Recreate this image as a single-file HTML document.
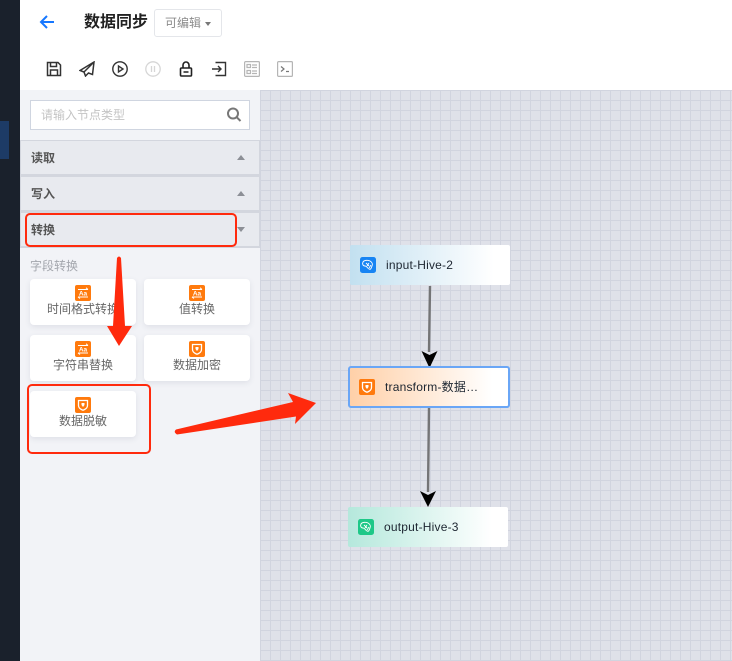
<!DOCTYPE html>
<html lang="zh-CN">
<head>
<meta charset="utf-8">
<style>
*{box-sizing:border-box}
html,body{margin:0;padding:0;width:732px;height:661px;overflow:hidden;background:#fff}
body{position:relative;font-family:"Liberation Sans","Noto Sans CJK SC",sans-serif;color:#333}
.abs{position:absolute}
.t{position:absolute;white-space:nowrap;line-height:16px}
.hdr{position:absolute;left:20px;width:240px;height:36px;background:#e8eaef;border:1px solid #d3d6de;border-bottom-width:2px}
.hdr span{position:absolute;left:10px;top:9px;font-size:12px;line-height:16px;font-weight:bold;color:#555}
.tri{position:absolute;left:216px;top:14px;width:0;height:0;border-left:4px solid transparent;border-right:4px solid transparent;border-bottom:5px solid #8c8f96}
.tri.d{border-bottom:0;border-top:5px solid #8c8f96}
.card{position:absolute;width:106px;height:46px;background:#fff;border-radius:4px;box-shadow:0 2px 6px rgba(60,70,100,.10);text-align:center;overflow:hidden}
.card svg{position:absolute;left:45px;top:6px}
.card span{position:absolute;left:0;right:0;top:22px;font-size:12px;line-height:16px;color:#666;white-space:nowrap}
.node{position:absolute;width:160px;height:40px;border-radius:2px;font-size:12px;letter-spacing:.2px;color:#1c2530}
.node span{position:absolute;left:36px;top:12px;line-height:16px;white-space:nowrap}
.node svg{position:absolute;left:10px;top:12px}
</style>
</head>
<body>
<div class="abs" style="left:0;top:0;width:20px;height:661px;background:#1a212c"></div>
<div class="abs" style="left:0;top:121px;width:9px;height:38px;background:#1d3b66"></div>

<svg class="abs" style="left:38px;top:13px" width="18" height="18" viewBox="0 0 18 18" fill="none" stroke="#1677ff" stroke-width="2"><path d="M3 9H16M9 3 3 9l6 6"/></svg>
<div class="t" style="left:84px;top:13px;font-size:16px;line-height:20px;font-weight:bold;color:#222">数据同步</div>
<div class="abs" style="left:154px;top:9px;width:68px;height:28px;border:1px solid #e4e6ea;border-radius:3px"></div>
<div class="t" style="left:165px;top:15px;font-size:12px;color:#8b8b8b">可编辑</div>
<div class="abs" style="left:205px;top:22px;width:0;height:0;border-left:3.5px solid transparent;border-right:3.5px solid transparent;border-top:4px solid #777"></div>

<!-- toolbar -->
<svg class="abs" style="left:46px;top:61px" width="16" height="16" viewBox="0 0 16 16" fill="none" stroke="#333" stroke-width="1.500"><path d="M1.500 1.500H12L14.500 4V14.500H1.500Z"/><path d="M4.500 1.500V5.500H10.500V1.500M4.500 14.500V9H11.500V14.500"/></svg>
<svg class="abs" style="left:79px;top:61px" width="16" height="16" viewBox="0 0 16 16" fill="none" stroke="#333" stroke-width="1.500"><path d="M15 1 1 9.500l4 1.500 1.500 4 3-3 4 1.500zM15 1 5 11"/></svg>
<svg class="abs" style="left:112px;top:61px" width="16" height="16" viewBox="0 0 16 16" fill="none" stroke="#333" stroke-width="1.400"><circle cx="8" cy="8" r="7.200"/><path d="M6.500 5v6L11 8z"/></svg>
<svg class="abs" style="left:145px;top:61px" width="16" height="16" viewBox="0 0 16 16" fill="none" stroke="#d6d6d6" stroke-width="1.300"><circle cx="8" cy="8" r="7.200"/><path d="M6.500 5v6M9.500 5v6"/></svg>
<svg class="abs" style="left:178px;top:61px" width="16" height="16" viewBox="0 0 16 16" fill="none" stroke="#222" stroke-width="1.600"><rect x="2.500" y="7" width="11" height="8" rx="1"/><path d="M5 7V4a3 3 0 0 1 6 0V7M5.500 11H10.500"/></svg>
<svg class="abs" style="left:211px;top:61px" width="16" height="16" viewBox="0 0 16 16" fill="none" stroke="#333" stroke-width="1.400"><path d="M4.500 1.500H14.500V14.500H4.500M1 8H10M7 5l3 3-3 3"/></svg>
<svg class="abs" style="left:244px;top:61px" width="16" height="16" viewBox="0 0 16 16" fill="none" stroke="#b5b5b5" stroke-width="1.200"><rect x=".6" y=".6" width="14.800" height="14.800" rx="1"/><path d="M3 3.500H6.500V6.500H3ZM3 9.500H6.500V12.500H3ZM8 4H13M8 6.500H13M8 10H13M8 12.500H13"/></svg>
<svg class="abs" style="left:277px;top:61px" width="16" height="16" viewBox="0 0 16 16" fill="none" stroke="#b5b5b5" stroke-width="1.200"><rect x=".6" y=".6" width="14.800" height="14.800" rx="1"/><path stroke="#777" d="M4 5.500 7 8 4 10.500M9 10.500H12"/></svg>

<!-- left panel -->
<div class="abs" style="left:20px;top:90px;width:240px;height:571px;background:#f2f3f7"></div>
<div class="abs" style="left:30px;top:100px;width:220px;height:30px;background:#fff;border:1px solid #cfd5e0"></div>
<div class="t" style="left:41px;top:107px;font-size:12px;color:#c4c4c4">请输入节点类型</div>
<svg class="abs" style="left:226px;top:106px" width="16" height="17" viewBox="0 0 16 17" fill="none" stroke="#777" stroke-width="2"><circle cx="7" cy="7.500" r="5"/><path d="M10.800 11.300 14.500 15"/></svg>

<div class="hdr" style="top:140px"><span>读取</span><i class="tri"></i></div>
<div class="hdr" style="top:176px"><span>写入</span><i class="tri"></i></div>
<div class="hdr" style="top:212px"><span>转换</span><i class="tri d"></i></div>

<div class="t" style="left:30px;top:258px;font-size:12px;color:#a3a6ad">字段转换</div>

<div class="card" style="left:30px;top:279px"><svg width="16" height="16" viewBox="0 0 16 16"><rect width="16" height="16" rx="2" fill="#ff7a0d"/><path d="M3 4.500H13M11 2.800 13 4.500M3 12H13M3 12l2 1.500" stroke="#fff" fill="none"/><text x="8" y="10.300" font-size="6.500" font-weight="bold" text-anchor="middle" fill="#fff" font-family="Liberation Sans">Aa</text></svg><span>时间格式转换</span></div>
<div class="card" style="left:144px;top:279px"><svg width="16" height="16" viewBox="0 0 16 16"><rect width="16" height="16" rx="2" fill="#ff7a0d"/><path d="M3 4.500H13M11 2.800 13 4.500M3 12H13M3 12l2 1.500" stroke="#fff" fill="none"/><text x="8" y="10.300" font-size="6.500" font-weight="bold" text-anchor="middle" fill="#fff" font-family="Liberation Sans">Aa</text></svg><span>值转换</span></div>
<div class="card" style="left:30px;top:335px"><svg width="16" height="16" viewBox="0 0 16 16"><rect width="16" height="16" rx="2" fill="#ff7a0d"/><path d="M3 4.500H13M11 2.800 13 4.500M3 12H13M3 12l2 1.500" stroke="#fff" fill="none"/><text x="8" y="10.300" font-size="6.500" font-weight="bold" text-anchor="middle" fill="#fff" font-family="Liberation Sans">Aa</text></svg><span>字符串替换</span></div>
<div class="card" style="left:144px;top:335px"><svg width="16" height="16" viewBox="0 0 16 16"><rect width="16" height="16" rx="2" fill="#ff7a0d"/><path d="M3.500 3.500H12.500V8.500C12.500 11 10 12.500 8 13.200 6 12.500 3.500 11 3.500 8.500Z" stroke="#fff" stroke-width="1.300" fill="none"/><path d="M6.500 6H9.500V8L8 10 6.500 8Z" fill="#fff"/></svg><span>数据加密</span></div>
<div class="card" style="left:30px;top:391px"><svg width="16" height="16" viewBox="0 0 16 16"><rect width="16" height="16" rx="2" fill="#ff7a0d"/><path d="M3.500 3.500H12.500V8.500C12.500 11 10 12.500 8 13.200 6 12.500 3.500 11 3.500 8.500Z" stroke="#fff" stroke-width="1.300" fill="none"/><path d="M6.500 6H9.500V8L8 10 6.500 8Z" fill="#fff"/></svg><span>数据脱敏</span></div>

<!-- canvas -->
<div class="abs" style="left:260px;top:90px;width:472px;height:571px;background-color:#dfe1e9;background-image:linear-gradient(#d1d4df 1px,transparent 1px),linear-gradient(90deg,#d1d4df 1px,transparent 1px);background-size:10px 10px;background-position:0 0"></div>

<svg class="abs" style="left:340px;top:280px" width="180" height="240" viewBox="0 0 180 240">
<path d="M90 6 89 72M89 127 88 212" stroke="#747476" stroke-width="2.400" fill="none"/>
<path d="M81.500 71 89.500 75 97.500 71 89.500 88Z" fill="#000"/>
<path d="M80 211 88 215 96 211 88 227Z" fill="#000"/>
</svg>

<div class="node" style="left:350px;top:245px;background:linear-gradient(90deg,#c2e0f0,#fff 90%)"><svg width="16" height="16" viewBox="0 0 16 16"><rect width="16" height="16" rx="2.500" fill="#1784f3"/><path d="M3 5c1-2 5-2 7-1s3 3 2 5-1 4-3 3-2-3-4-3-3-2-2-4ZM6 6l3 3M9 6l-2 3M11 8l-2 3" stroke="#fff" stroke-width=".9" fill="none"/></svg><span>input-Hive-2</span></div>

<div class="node" style="left:348px;top:366px;width:162px;height:42px;border:2px solid #6aa6f6;border-radius:3px;background:linear-gradient(90deg,#ffd0a8,#fff 90%)"><svg style="left:9px;top:11px" width="16" height="16" viewBox="0 0 16 16"><rect width="16" height="16" rx="2" fill="#ff7a0d"/><path d="M3.500 3.500H12.500V8.500C12.500 11 10 12.500 8 13.200 6 12.500 3.500 11 3.500 8.500Z" stroke="#fff" stroke-width="1.300" fill="none"/><path d="M6.500 6H9.500V8L8 10 6.500 8Z" fill="#fff"/></svg><span style="left:35px;top:11px">transform-数据…</span></div>

<div class="node" style="left:348px;top:507px;background:linear-gradient(90deg,#b5e8dc,#fff 90%)"><svg width="16" height="16" viewBox="0 0 16 16"><rect width="16" height="16" rx="2.500" fill="#1ec888"/><path d="M3 5c1-2 5-2 7-1s3 3 2 5-1 4-3 3-2-3-4-3-3-2-2-4ZM6 6l3 3M9 6l-2 3M11 8l-2 3" stroke="#fff" stroke-width=".9" fill="none"/></svg><span>output-Hive-3</span></div>

<!-- annotations -->
<div class="abs" style="left:25px;top:213px;width:212px;height:34px;border:2.500px solid #ff2a0d;border-radius:5px"></div>
<div class="abs" style="left:27px;top:384px;width:124px;height:70px;border:2.500px solid #ff2a0d;border-radius:5px"></div>
<svg class="abs" style="left:0;top:0" width="732" height="661" viewBox="0 0 732 661">
<path d="M117 258Q119 255 121 258L125 326 132 326 119 346 107 326 113 326Z" fill="#ff2a0d"/>
<path d="M176 429.500 293 402 288 393 316 403 295 424 296 416.500 177 434.500Q173 432 176 429.500Z" fill="#ff2a0d"/>
</svg>
</body>
</html>
